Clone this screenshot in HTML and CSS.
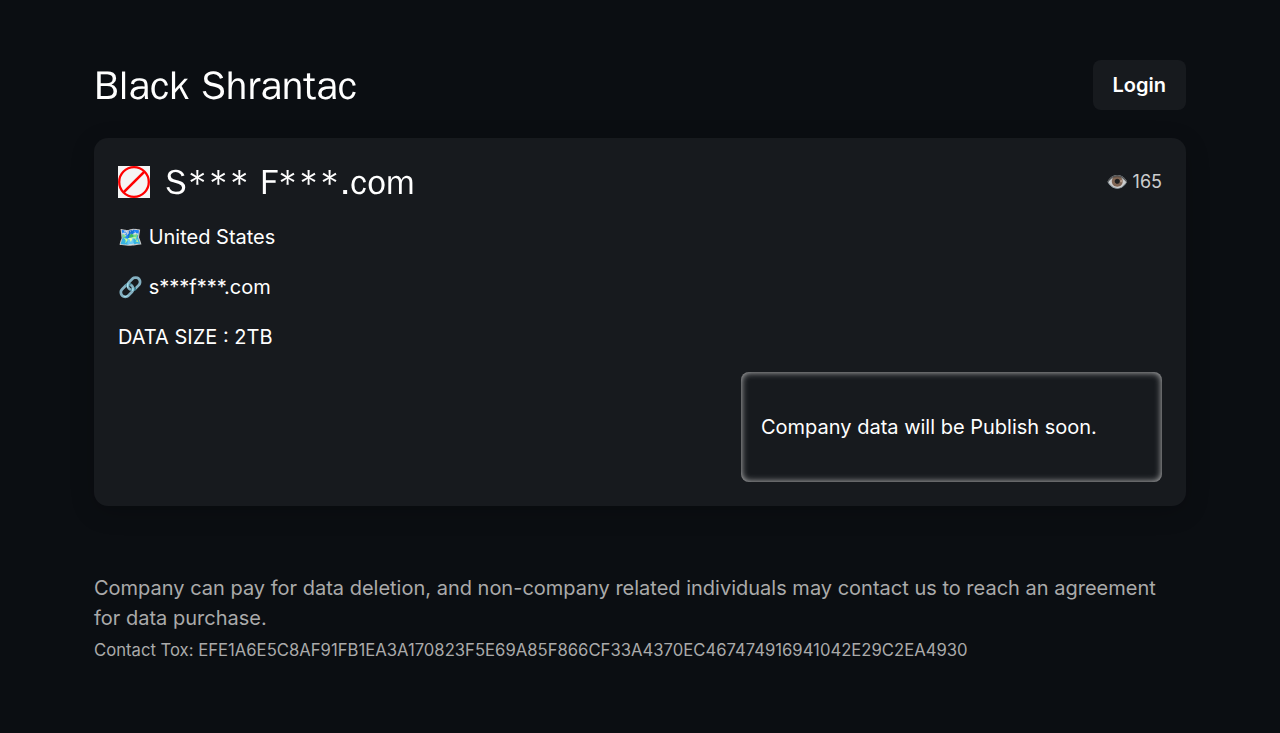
FILE: index.html
```html
<!DOCTYPE html>
<html lang="en">
<head>
<meta charset="utf-8">
<title>Black Shrantac</title>
<link rel="stylesheet" href="styles.css">
</head>
<body>
<div class="page">
  <header class="header">
    <h1 class="brand">Black Shrantac</h1>
    <button class="login" type="button">Login</button>
  </header>
  <main class="card">
    <div class="card-head">
      <svg class="logo" viewBox="0 0 32 32" aria-hidden="true">
        <rect width="32" height="32" fill="#f5f5f5"/>
        <circle cx="16" cy="16" r="14.8" fill="none" stroke="#f00" stroke-width="2.3"/>
        <path d="M5.8 26.2 26.2 5.8" stroke="#f00" stroke-width="2.6"/>
      </svg>
      <h2 class="title">S*** F***.com</h2>
      <span class="views">👁️ 165</span>
    </div>
    <p class="line">🗺️ United States</p>
    <p class="line">🔗 s***f***.com</p>
    <p class="line">DATA SIZE : 2TB</p>
    <div class="notice">Company data will be Publish soon.</div>
  </main>
  <footer class="footer">
    <p class="terms">Company can pay for data deletion, and non-company related individuals may contact us to reach an agreement for data purchase.</p>
    <p class="tox"><small>Contact Tox: EFE1A6E5C8AF91FB1EA3A170823F5E69A85F866CF33A4370EC467474916941042E29C2EA4930</small></p>
  </footer>
</div>
</body>
</html>
```
FILE: styles.css
```css
* { box-sizing: border-box; }
body {
  margin: 0;
  background: #0b0e12;
  color: #fff;
  font: 20px/30px Inter, "Noto Sans", sans-serif;
}
.page { max-width: 1140px; margin: 0 auto; padding: 60px 24px; }
.header { display: flex; align-items: center; justify-content: space-between; margin-bottom: 28px; }
.brand, .title { margin: 0; font-family: "WenQuanYi Zen Hei", "Liberation Sans", sans-serif; font-weight: 500; }
.brand { padding-top: 2px; font-size: 40px; line-height: 48px; }
.login {
  padding: 10px 20px;
  border: 0;
  border-radius: 8px;
  background: #171a1e;
  color: #fff;
  font: 600 20px/30px Inter, sans-serif;
}
.card {
  padding: 24px;
  border-radius: 14px;
  background: #171a1e;
  box-shadow: 0 6px 24px rgba(0, 0, 0, .2);
}
.card-head { display: flex; align-items: center; gap: 15px; height: 40px; margin-bottom: 20px; }
.logo { width: 32px; height: 32px; }
.title { font-size: 35px; line-height: 40px; }
.views { margin-left: auto; color: rgba(255, 255, 255, .8); font-size: 18px; }
.line { margin: 0 0 20px; }
.notice {
  width: 421px;
  max-width: 100%;
  margin-left: auto;
  padding: 40px 20px;
  border-radius: 8px;
  box-shadow: inset 0 0 7px #ccc;
}
.footer { margin-top: 67px; color: #aaa; }
.terms, .tox { margin: 0; }
.tox { margin-top: 1px; }
```
